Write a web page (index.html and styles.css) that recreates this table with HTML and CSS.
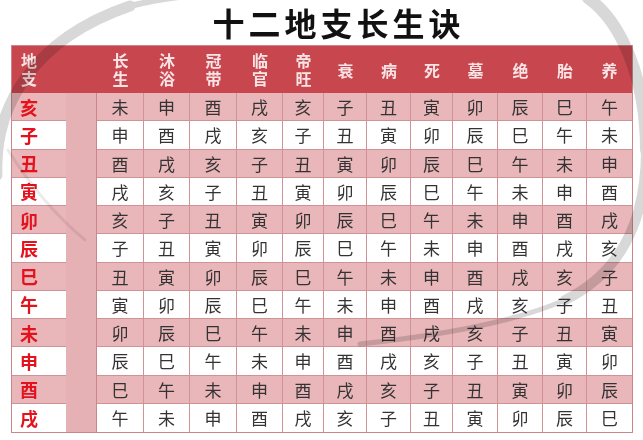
FILE: index.html
```html
<!DOCTYPE html>
<html lang="zh">
<head>
<meta charset="utf-8">
<title>十二地支长生诀</title>
<link rel="stylesheet" href="styles.css">
</head>
<body>
<div class="page">
  <h1 class="title">十二地支长生诀</h1>
  <div class="grid">
    <div class="h h-first"><span class="v">地支</span></div>
    <div class="h"></div>
    <div class="h"><span class="v">长生</span></div>
    <div class="h"><span class="v">沐浴</span></div>
    <div class="h"><span class="v">冠带</span></div>
    <div class="h"><span class="v">临官</span></div>
    <div class="h"><span class="v">帝旺</span></div>
    <div class="h"><span>衰</span></div>
    <div class="h"><span>病</span></div>
    <div class="h"><span>死</span></div>
    <div class="h"><span>墓</span></div>
    <div class="h"><span>绝</span></div>
    <div class="h"><span>胎</span></div>
    <div class="h h-last"><span>养</span></div>

    <div class="gap-col"></div>

    <div class="b z pink">亥</div><div class="c pink">未</div><div class="c pink">申</div><div class="c pink">酉</div><div class="c pink">戌</div><div class="c pink">亥</div><div class="c pink">子</div><div class="c pink">丑</div><div class="c pink">寅</div><div class="c pink">卯</div><div class="c pink">辰</div><div class="c pink">巳</div><div class="c pink e">午</div>
    <div class="b z">子</div><div class="c">申</div><div class="c">酉</div><div class="c">戌</div><div class="c">亥</div><div class="c">子</div><div class="c">丑</div><div class="c">寅</div><div class="c">卯</div><div class="c">辰</div><div class="c">巳</div><div class="c">午</div><div class="c e">未</div>
    <div class="b z pink">丑</div><div class="c pink">酉</div><div class="c pink">戌</div><div class="c pink">亥</div><div class="c pink">子</div><div class="c pink">丑</div><div class="c pink">寅</div><div class="c pink">卯</div><div class="c pink">辰</div><div class="c pink">巳</div><div class="c pink">午</div><div class="c pink">未</div><div class="c pink e">申</div>
    <div class="b z">寅</div><div class="c">戌</div><div class="c">亥</div><div class="c">子</div><div class="c">丑</div><div class="c">寅</div><div class="c">卯</div><div class="c">辰</div><div class="c">巳</div><div class="c">午</div><div class="c">未</div><div class="c">申</div><div class="c e">酉</div>
    <div class="b z pink">卯</div><div class="c pink">亥</div><div class="c pink">子</div><div class="c pink">丑</div><div class="c pink">寅</div><div class="c pink">卯</div><div class="c pink">辰</div><div class="c pink">巳</div><div class="c pink">午</div><div class="c pink">未</div><div class="c pink">申</div><div class="c pink">酉</div><div class="c pink e">戌</div>
    <div class="b z">辰</div><div class="c">子</div><div class="c">丑</div><div class="c">寅</div><div class="c">卯</div><div class="c">辰</div><div class="c">巳</div><div class="c">午</div><div class="c">未</div><div class="c">申</div><div class="c">酉</div><div class="c">戌</div><div class="c e">亥</div>
    <div class="b z pink">巳</div><div class="c pink">丑</div><div class="c pink">寅</div><div class="c pink">卯</div><div class="c pink">辰</div><div class="c pink">巳</div><div class="c pink">午</div><div class="c pink">未</div><div class="c pink">申</div><div class="c pink">酉</div><div class="c pink">戌</div><div class="c pink">亥</div><div class="c pink e">子</div>
    <div class="b z">午</div><div class="c">寅</div><div class="c">卯</div><div class="c">辰</div><div class="c">巳</div><div class="c">午</div><div class="c">未</div><div class="c">申</div><div class="c">酉</div><div class="c">戌</div><div class="c">亥</div><div class="c">子</div><div class="c e">丑</div>
    <div class="b z pink">未</div><div class="c pink">卯</div><div class="c pink">辰</div><div class="c pink">巳</div><div class="c pink">午</div><div class="c pink">未</div><div class="c pink">申</div><div class="c pink">酉</div><div class="c pink">戌</div><div class="c pink">亥</div><div class="c pink">子</div><div class="c pink">丑</div><div class="c pink e">寅</div>
    <div class="b z">申</div><div class="c">辰</div><div class="c">巳</div><div class="c">午</div><div class="c">未</div><div class="c">申</div><div class="c">酉</div><div class="c">戌</div><div class="c">亥</div><div class="c">子</div><div class="c">丑</div><div class="c">寅</div><div class="c e">卯</div>
    <div class="b z pink">酉</div><div class="c pink">巳</div><div class="c pink">午</div><div class="c pink">未</div><div class="c pink">申</div><div class="c pink">酉</div><div class="c pink">戌</div><div class="c pink">亥</div><div class="c pink">子</div><div class="c pink">丑</div><div class="c pink">寅</div><div class="c pink">卯</div><div class="c pink e">辰</div>
    <div class="b z l">戌</div><div class="c l">午</div><div class="c l">未</div><div class="c l">申</div><div class="c l">酉</div><div class="c l">戌</div><div class="c l">亥</div><div class="c l">子</div><div class="c l">丑</div><div class="c l">寅</div><div class="c l">卯</div><div class="c l">辰</div><div class="c l e">巳</div>
  </div>
  <svg class="swoosh" width="643" height="440" viewBox="0 0 643 440" aria-hidden="true">
    <path d="M -3 175 C -6 110, 30 40, 130 6" stroke-width="11"/>
    <path d="M 130 6 C 210 -14, 320 -10, 400 -4" stroke-width="6"/>
    <path d="M 588 -2 C 622 22, 646 80, 646 150" stroke-width="12"/>
    <path d="M 646 150 C 646 220, 622 272, 565 300" stroke-width="10"/>
    <path d="M 565 300 C 515 322, 445 335, 360 344" stroke-width="5"/>
    <path class="faint" d="M 8 150 C 30 185, 55 215, 85 240" stroke-width="3"/>
  </svg>
</div>
</body>
</html>
```

FILE: styles.css
```css
html, body {
  margin: 0;
  padding: 0;
  background: #ffffff;
}

.page {
  position: relative;
  width: 643px;
  height: 440px;
  overflow: hidden;
  background: #ffffff;
  font-family: "Noto Sans CJK SC", "Noto Sans", sans-serif;
}

.title {
  margin: 0;
  height: 45px;
  line-height: 45px;
  padding-left: 34px;
  text-align: center;
  font-size: 32px;
  font-weight: 700;
  letter-spacing: 4px;
  color: #111111;
}

.grid {
  box-sizing: border-box;
  margin-left: 11px;
  width: 622px;
  border: 1px solid #c9868c;
  display: grid;
  grid-template-columns: 54px 31px 47px 46px 47px 46px 41px 43px 44px 42px 45px 45px 44px 45px;
  grid-template-rows: 47px repeat(12, 28.25px);
}

.h {
  background: #c8464e;
  color: #f8e4e5;
  font-weight: 700;
  font-size: 16px;
  line-height: 18px;
  display: flex;
  align-items: center;
  justify-content: center;
}

.h .v {
  writing-mode: vertical-rl;
  text-orientation: upright;
  letter-spacing: 2px;
  line-height: 18px;
  margin-bottom: -2px;
}

.h-first {
  justify-content: flex-start;
  padding-left: 8px;
}

.gap-col {
  grid-column: 2;
  grid-row: 2 / span 12;
  background: #e6b1b5;
  border-right: 1px solid #c9868c;
  border-left: 1px solid #c9868c;
  margin-left: -1px;
}

.b, .c {
  box-sizing: border-box;
  border-bottom: 1px solid #cf9297;
  display: flex;
  align-items: center;
  background: #ffffff;
}

.c {
  border-right: 1px solid #cf9297;
  justify-content: center;
  font-size: 17px;
  color: #333333;
}

.c.e {
  border-right: none;
}

.l {
  border-bottom: none;
}

.z {
  grid-column: 1;
  padding-left: 8px;
  font-size: 18px;
  font-weight: 700;
  color: #e3121c;
}

.pink {
  background: #e9b6ba;
}

.swoosh {
  position: absolute;
  left: 0;
  top: 0;
  pointer-events: none;
  mix-blend-mode: multiply;
  opacity: 0.45;
}

.swoosh path {
  fill: none;
  stroke: #a8a8a8;
  stroke-linecap: round;
}

.swoosh .faint {
  opacity: 0.5;
}
```
